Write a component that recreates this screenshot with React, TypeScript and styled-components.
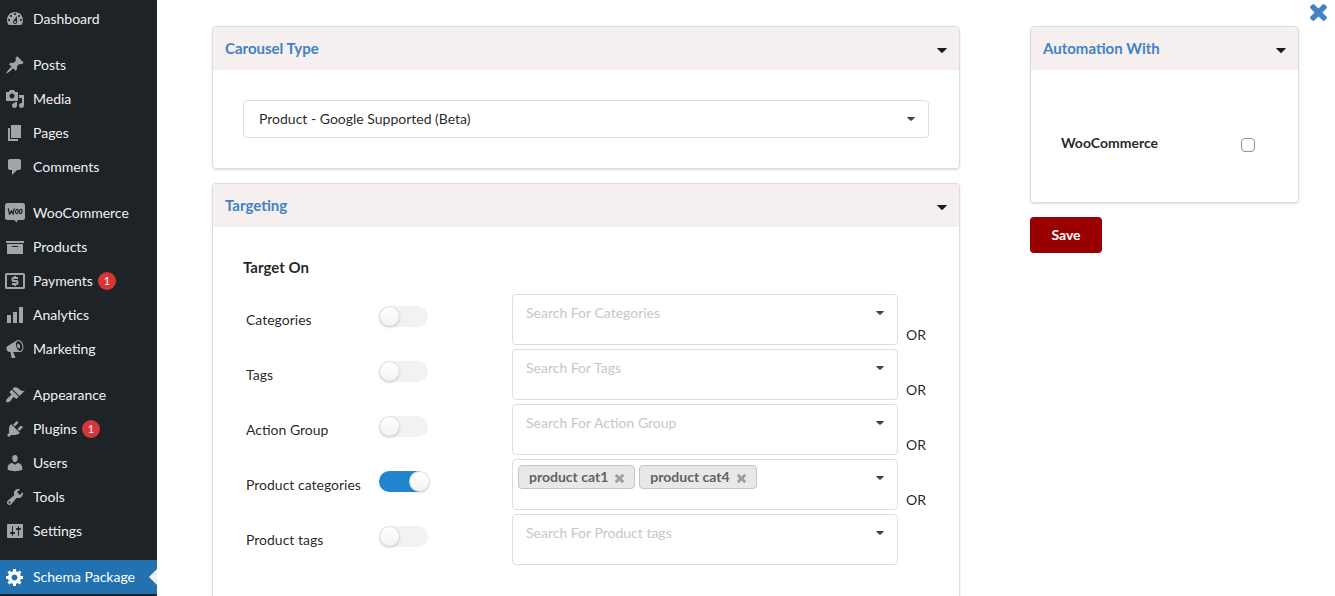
import React, { useState } from 'react';
import styled, { createGlobalStyle } from 'styled-components';

const GlobalStyle = createGlobalStyle`
  *, *::before, *::after { box-sizing: border-box; }
  body {
    margin: 0;
    background: #fff;
    color: rgba(0, 0, 0, 0.87);
    font-family: Lato, 'Helvetica Neue', Arial, sans-serif;
    font-size: 14px;
    line-height: 20px;
  }
  button, input, select { font: inherit; color: inherit; }
`;

const paths = {
  dashboard:
    'M3.76 16h12.48c1.1-1.37 1.76-3.11 1.76-5 0-4.42-3.58-8-8-8s-8 3.58-8 8c0 1.89.66 3.63 1.76 5zM10 4c.55 0 1 .45 1 1s-.45 1-1 1-1-.45-1-1 .45-1 1-1zM6 6c.55 0 1 .45 1 1s-.45 1-1 1-1-.45-1-1 .45-1 1-1zm8 0c.55 0 1 .45 1 1s-.45 1-1 1-1-.45-1-1 .45-1 1-1zm-5.37 5.55L12 7v6c0 1.1-.9 2-2 2s-2-.9-2-2c0-.57.24-1.08.63-1.45zM4 10c.55 0 1 .45 1 1s-.45 1-1 1-1-.45-1-1 .45-1 1-1zm12 0c.55 0 1 .45 1 1s-.45 1-1 1-1-.45-1-1 .45-1 1-1zm-5 3c0-.55-.45-1-1-1s-1 .45-1 1 .45 1 1 1 1-.45 1-1z',
  post:
    'M10.44 3.02l1.82-1.82 6.36 6.35-1.83 1.82c-1.05-.68-2.48-.57-3.41.36l-.75.75c-.92.93-1.04 2.35-.35 3.41l-1.83 1.82-2.41-2.41-2.8 2.79c-.42.42-3.38 2.71-3.8 2.29s1.86-3.39 2.28-3.81l2.79-2.79L4.1 9.36l1.83-1.82c1.05.69 2.48.57 3.4-.36l.75-.75c.93-.92 1.05-2.35.36-3.41z',
  media:
    'M13 11V4c0-.55-.45-1-1-1h-1.67L9 1H5L3.67 3H2c-.55 0-1 .45-1 1v7c0 .55.45 1 1 1h10c.55 0 1-.45 1-1zM7 4.5c1.38 0 2.5 1.12 2.5 2.5S8.38 9.5 7 9.5 4.5 8.38 4.5 7 5.62 4.5 7 4.5zM14 6h5v10.5c0 1.38-1.12 2.5-2.5 2.5S14 17.88 14 16.5s1.12-2.5 2.5-2.5c.17 0 .34.02.5.05V9h-3V6zm-4 8.05V13h2v3.5c0 1.38-1.12 2.5-2.5 2.5S7 17.88 7 16.5 8.12 14 9.5 14c.17 0 .34.02.5.05z',
  page: 'M6 15V2h10v13H6zm-1 1h8v2H3V5h2v11z',
  comments:
    'M5 2h9c1.1 0 2 .9 2 2v7c0 1.1-.9 2-2 2h-2l-5 5v-5H5c-1.1 0-2-.9-2-2V4c0-1.1.9-2 2-2z',
  archive: 'M19 4v2H1V4h18zM2 7h16v10H2V7zm11 3V9H7v1h6z',
  chart: 'M18 18V2h-4v16h4zm-6 0V7H8v11h4zm-6 0v-8H2v8h4z',
  megaphone:
    'M18.15 5.94c.46 1.62.38 3.22-.02 4.48-.42 1.28-1.26 2.18-2.3 2.48-.16.06-.26.06-.4.06-.06.02-.12.02-.18.02-.06.02-.14.02-.22.02h-6.8l2.22 5.5c.02.14-.06.26-.14.34-.08.1-.24.16-.34.16H6.95c-.1 0-.26-.06-.34-.16-.08-.08-.16-.2-.14-.34l-1-5.5H4.25l-.02-.02c-.5.06-1.08-.18-1.54-.62s-.88-1.08-1.06-1.88c-.24-.8-.2-1.56-.02-2.2.18-.62.58-1.08 1.06-1.3l.02-.02 9-5.4c.1-.06.18-.1.24-.16.06-.04.14-.08.24-.12.16-.08.28-.12.5-.18 1.04-.3 2.24.1 3.22.98s1.84 2.24 2.26 3.86zm-2.58 5.98h-.02c.4-.1.74-.34 1.04-.7.58-.7.86-1.76.86-3.04 0-.64-.1-1.3-.28-1.98-.34-1.36-1.02-2.5-1.78-3.24s-1.68-1.1-2.46-.88c-.82.22-1.4.96-1.7 2-.32 1.04-.28 2.36.06 3.72.38 1.36 1 2.5 1.8 3.24.78.74 1.62 1.1 2.48.88zm-2.54-7.08c.22-.04.42-.02.62.04.38.16.76.48 1.02 1s.42 1.2.42 1.78c0 .3-.04.56-.12.8-.18.48-.44.84-.86.94-.34.1-.8-.06-1.14-.4s-.64-.86-.78-1.5c-.18-.62-.12-1.24.02-1.72s.48-.84.82-.94z',
  appearance:
    'M14.48 11.06L7.41 3.99l1.5-1.5c.5-.56 2.3-.47 3.51.32 1.21.8 1.43 1.28 2.91 2.1 1.18.64 2.45 1.26 4.45.85zm-.71.71L6.7 4.7 4.93 6.47c-.39.39-.39 1.02 0 1.41l1.06 1.06c.39.39.39 1.03 0 1.42-.6.6-1.43 1.11-2.21 1.69-.35.26-.7.53-1.01.84C1.43 14.23.4 16.08 1.4 17.07c.99 1 2.84-.03 4.18-1.36.31-.31.58-.66.85-1.02.57-.78 1.08-1.61 1.69-2.21.39-.39 1.02-.39 1.41 0l1.06 1.06c.39.39 1.02.39 1.41 0z',
  plugins:
    'M13.11 4.36L9.87 7.6 8 5.73l3.24-3.24c.35-.34 1.05-.2 1.56.32.52.51.66 1.21.31 1.55zm-8 1.77l.91-1.12 9.01 9.01-1.19.84c-.71.71-2.63 1.16-3.82 1.16H6.14L4.9 17.26c-.59.59-1.54.59-2.12 0-.59-.58-.59-1.53 0-2.12l1.24-1.24v-3.88c0-1.13.4-3.19 1.09-3.89zm7.26 3.97l3.24-3.24c.34-.35 1.04-.21 1.55.31.52.51.66 1.21.31 1.55l-3.24 3.25z',
  users:
    'M10 9.25c-2.27 0-2.73-3.44-2.73-3.44C7 4.02 7.82 2 9.97 2c2.16 0 2.98 2.02 2.71 3.81 0 0-.41 3.44-2.68 3.44zm0 2.57L12.72 10c2.39 0 4.52 2.33 4.52 4.53v2.49s-3.65 1.13-7.24 1.13c-3.65 0-7.24-1.13-7.24-1.13v-2.49c0-2.25 1.94-4.48 4.47-4.48z',
  tools:
    'M16.68 9.77c-1.34 1.34-3.3 1.67-4.95.99l-5.41 6.52c-.99.99-2.59.99-3.58 0s-.99-2.59 0-3.57l6.52-5.42c-.68-1.65-.35-3.61.99-4.95 1.28-1.28 3.12-1.62 4.72-1.06l-2.89 2.89 2.82 2.82 2.86-2.87c.53 1.58.18 3.39-1.08 4.65zM3.81 16.21c.4.39 1.04.39 1.43 0 .4-.4.4-1.04 0-1.43-.39-.4-1.03-.4-1.43 0-.39.39-.39 1.03 0 1.43z',
  settings:
    'M18 16V4c0-.55-.45-1-1-1H3c-.55 0-1 .45-1 1v12c0 .55.45 1 1 1h14c.55 0 1-.45 1-1zM8 11h1c.55 0 1 .45 1 1s-.45 1-1 1H8v1.5c0 .28-.22.5-.5.5s-.5-.22-.5-.5V13H6c-.55 0-1-.45-1-1s.45-1 1-1h1V5.5c0-.28.22-.5.5-.5s.5.22.5.5V11zm5-2h-1c-.55 0-1-.45-1-1s.45-1 1-1h1V5.5c0-.28.22-.5.5-.5s.5.22.5.5V7h1c.55 0 1 .45 1 1s-.45 1-1 1h-1v5.5c0 .28-.22.5-.5.5s-.5-.22-.5-.5V9z',
  generic:
    'M18 12h-2.18c-.17.7-.44 1.35-.81 1.93l1.54 1.54-2.1 2.1-1.54-1.54c-.58.36-1.23.63-1.91.79V19H8v-2.18c-.68-.16-1.33-.43-1.91-.79l-1.54 1.54-2.12-2.12 1.54-1.54c-.36-.58-.63-1.23-.79-1.91H1V9.03h2.17c.16-.7.44-1.35.8-1.94L2.43 5.55l2.1-2.1 1.54 1.54c.58-.37 1.24-.64 1.93-.81V2h3v2.18c.68.16 1.33.43 1.91.79l1.54-1.54 2.12 2.12-1.54 1.54c.36.59.64 1.24.8 1.94H18V12zm-8.5 1.5c1.66 0 3-1.34 3-3s-1.34-3-3-3-3 1.34-3 3 1.34 3 3 3z',
};

type IconName = keyof typeof paths | 'woo' | 'payments';

const MenuSvg = styled.svg`
  width: 20px;
  height: 20px;
  flex: none;
  fill: currentColor;
`;

function MenuIcon({ name }: { name: IconName }) {
  if (name === 'woo') {
    return (
      <MenuSvg viewBox="0 0 20 20" aria-hidden="true">
        <path d="M2.500 0H17.500Q20 0 20 2.500V14.500Q20 17 17.500 17H12.500L12 19.500L9 17H2.500Q0 17 0 14.500V2.500Q0 0 2.500 0Z" />
        <g fill="none" stroke="#1d2327" strokeLinecap="round" strokeLinejoin="round">
          <path strokeWidth="1.200" d="M3.300 5.600L4.600 11.500L6.600 7.500L8.100 11.500L9.200 5.600" />
          <ellipse strokeWidth="1.200" cx="11.900" cy="8.500" rx="1.300" ry="2.200" transform="rotate(12 11.900 8.500)" />
          <ellipse strokeWidth="1.200" cx="15.700" cy="8.500" rx="1.300" ry="2.200" transform="rotate(12 15.700 8.500)" />
        </g>
      </MenuSvg>
    );
  }
  if (name === 'payments') {
    return (
      <MenuSvg viewBox="0 0 20 20" aria-hidden="true">
        <path
          fillRule="evenodd"
          d="M1.500 2H18.500Q20 2 20 3.500V16.500Q20 18 18.500 18H1.500Q0 18 0 16.500V3.500Q0 2 1.500 2ZM2 4V16H18V4Z"
        />
        <path
          fill="none"
          stroke="currentColor"
          strokeWidth="2"
          d="M13 7H8Q7.500 7 7.500 7.800V9.200Q7.500 10 8.200 10H11.800Q12.500 10 12.500 10.600V12.200Q12.500 13 11.800 13H7M10 5V7.500M10 12.500V15"
        />
      </MenuSvg>
    );
  }
  return (
    <MenuSvg viewBox="0 0 20 20" aria-hidden="true">
      <path fillRule="evenodd" d={paths[name]} />
    </MenuSvg>
  );
}

const CrossSvg = styled.svg<{ $size: number }>`
  display: block;
  width: ${(p) => p.$size}px;
  height: ${(p) => p.$size}px;
  fill: currentColor;
`;

const Cross = ({ size }: { size: number }) => (
  <CrossSvg $size={size} viewBox="302 366 1188 1188" aria-hidden="true">
    <path d="M1490 1322q0 40-28 68l-136 136q-28 28-68 28t-68-28l-294-294-294 294q-28 28-68 28t-68-28l-136-136q-28-28-28-68t28-68l294-294-294-294q-28-28-28-68t28-68l136-136q28-28 68-28t68 28l294 294 294-294q28-28 68-28t68 28l136 136q28 28 28 68t-28 68l-294 294 294 294q28 28 28 68z" />
  </CrossSvg>
);

const CaretSvg = styled.svg<{ $small?: boolean }>`
  display: block;
  flex: none;
  width: ${(p) => (p.$small ? 8 : 10)}px;
  height: ${(p) => (p.$small ? 4 : 5)}px;
  fill: ${(p) => (p.$small ? '#444' : '#1b1c1d')};
`;

const Caret = ({ small }: { small?: boolean }) => (
  <CaretSvg $small={small} viewBox="0 0 10 5" aria-hidden="true">
    <path d="M.6 0H9.400Q10 .3 9.600 .8L5.500 4.800Q5 5.200 4.500 4.800L.4 .8Q0 .3 .6 0Z" />
  </CaretSvg>
);

const Layout = styled.div`
  display: flex;
  height: 100vh;
  overflow: hidden;
`;

const Sidebar = styled.nav`
  flex: none;
  width: 157px;
  padding-top: 2px;
  background: #1d2327;
`;

const MenuGroup = styled.ul`
  list-style: none;
  margin: 0 0 12px;
  padding: 0;
`;

const MenuLink = styled.a<{ $active?: boolean }>`
  position: relative;
  display: flex;
  align-items: center;
  height: 34px;
  padding-left: 5px;
  gap: 8px;
  text-decoration: none;
  white-space: nowrap;
  color: ${(p) => (p.$active ? '#fff' : '#f0f0f1')};
  background: ${(p) => (p.$active ? '#2271b1' : 'transparent')};

  ${MenuSvg} {
    color: ${(p) => (p.$active ? '#fff' : '#a0a5aa')};
  }

  &::after {
    content: '';
    display: ${(p) => (p.$active ? 'block' : 'none')};
    position: absolute;
    right: 0;
    top: 9px;
    border: 8px solid transparent;
    border-left-width: 0;
    border-right-color: #f0f0f1;
  }
`;

const Badge = styled.span`
  width: 18px;
  height: 18px;
  margin-left: -3px;
  border-radius: 9px;
  background: #d63638;
  color: #fff;
  font-size: 11px;
  line-height: 18px;
  text-align: center;
`;

const Main = styled.main`
  position: relative;
  flex: 1;
  min-width: 0;
  display: grid;
  grid-template-columns: 748fr 269fr;
  column-gap: 70px;
  align-items: start;
  padding: 26px 36px 0 55px;
`;

const CloseButton = styled.button`
  position: absolute;
  top: 4px;
  right: 8px;
  padding: 0;
  border: 0;
  background: none;
  color: #4183c4;
  cursor: pointer;
`;

const Column = styled.div`
  display: flex;
  flex-direction: column;
  gap: 14px;
`;

const Card = styled.section`
  border: 1px solid #dcdcde;
  border-radius: 4px;
  box-shadow: 0 1px 2px rgba(34, 36, 38, 0.15);
`;

const CardHeader = styled.header`
  display: flex;
  align-items: center;
  justify-content: space-between;
  height: 43px;
  padding: 0 12px;
  border-radius: 3px 3px 0 0;
  background: #f5efef;
`;

const CardTitle = styled.h2`
  margin: 0;
  padding-bottom: 2px;
  font-size: 15px;
  font-weight: 700;
  line-height: 20px;
  color: #4183c4;
`;

const CardToggle = styled.button`
  padding: 4px 0 0;
  border: 0;
  background: none;
  cursor: pointer;
`;

const CardBody = styled.div`
  padding: 30px;
`;

const SelectWrap = styled.div`
  position: relative;

  ${CaretSvg} {
    position: absolute;
    right: 14px;
    top: 17px;
    pointer-events: none;
  }
`;

const Select = styled.select`
  display: block;
  appearance: none;
  width: 100%;
  height: 38px;
  padding: 0 32px 0 15px;
  border: 1px solid #dededf;
  border-radius: 4px;
  background: #fff;
`;

const SectionTitle = styled.h3`
  margin: 0 0 17px;
  font-size: 15px;
  font-weight: 700;
  line-height: 20px;
`;

const TargetList = styled.div`
  display: flex;
  flex-direction: column;
  gap: 4px;
  padding: 0 0 30px 3px;
`;

const TargetRow = styled.div`
  display: grid;
  grid-template-columns: minmax(0, 133fr) minmax(0, 133fr) minmax(0, 386fr) minmax(0, 31fr);
  align-items: center;
`;

const TargetLabel = styled.label`
  white-space: nowrap;
`;

const Switch = styled.input`
  appearance: none;
  position: relative;
  width: 49px;
  height: 21px;
  margin: 0 0 6px;
  border-radius: 11px;
  background: #f2f2f2;
  cursor: pointer;

  &::before {
    content: '';
    position: absolute;
    top: 0;
    left: 0;
    width: 21px;
    height: 21px;
    border-radius: 50%;
    background: #fff linear-gradient(transparent, rgba(0, 0, 0, 0.05));
    box-shadow: 0 1px 2px rgba(34, 36, 38, 0.15), 0 0 0 1px rgba(34, 36, 38, 0.15) inset;
  }

  &:checked {
    background: #2185d0;
  }

  &:checked::before {
    left: 30px;
  }
`;

const SearchBox = styled.div`
  display: flex;
  align-items: flex-start;
  height: 51px;
  padding: 5px 13px 0 5px;
  gap: 4px;
  border: 1px solid #dededf;
  border-radius: 4px;

  ${CaretSvg} {
    margin-top: 11px;
  }
`;

const SearchInput = styled.input`
  flex: 1;
  min-width: 0;
  height: 24px;
  padding: 0 8px;
  border: 0;
  outline: 0;
  background: none;

  &::placeholder {
    color: #c7c7c7;
    opacity: 1;
  }
`;

const Chip = styled.span`
  display: flex;
  align-items: center;
  height: 24px;
  padding: 0 10px;
  gap: 7px;
  border: 1px solid #c6c7c7;
  border-radius: 4px;
  background: #e8e8e8;
  color: #636363;
  font-weight: 700;
  white-space: nowrap;
`;

const ChipRemove = styled.button`
  padding: 2px 0 0;
  border: 0;
  background: none;
  color: #9e9e9e;
  cursor: pointer;
`;

const OrText = styled.span`
  align-self: end;
  padding-left: 8px;
`;

const AutomationBody = styled.div`
  display: flex;
  align-items: center;
  justify-content: space-between;
  padding: 62px 43px 48px 30px;
`;

const AutomationLabel = styled.label`
  font-weight: 700;
  line-height: 22px;
`;

const Checkbox = styled.input`
  appearance: none;
  width: 14px;
  height: 14px;
  margin: 4px 0 0;
  border: 1px solid #8c8f94;
  border-radius: 4px;
  background: #fff;

  &:checked {
    background: #2185d0;
  }
`;

const SaveButton = styled.button`
  align-self: flex-start;
  width: 72px;
  height: 36px;
  padding: 0;
  border: 0;
  border-radius: 4px;
  background: #900;
  color: #fff;
  font-weight: 700;
  cursor: pointer;
`;

interface MenuEntry {
  icon: IconName;
  label: string;
  count?: number;
  active?: boolean;
}

const menu: MenuEntry[][] = [
  [{ icon: 'dashboard', label: 'Dashboard' }],
  [
    { icon: 'post', label: 'Posts' },
    { icon: 'media', label: 'Media' },
    { icon: 'page', label: 'Pages' },
    { icon: 'comments', label: 'Comments' },
  ],
  [
    { icon: 'woo', label: 'WooCommerce' },
    { icon: 'archive', label: 'Products' },
    { icon: 'payments', label: 'Payments', count: 1 },
    { icon: 'chart', label: 'Analytics' },
    { icon: 'megaphone', label: 'Marketing' },
  ],
  [
    { icon: 'appearance', label: 'Appearance' },
    { icon: 'plugins', label: 'Plugins', count: 1 },
    { icon: 'users', label: 'Users' },
    { icon: 'tools', label: 'Tools' },
    { icon: 'settings', label: 'Settings' },
  ],
  [{ icon: 'generic', label: 'Schema Package', active: true }],
];

interface Target {
  id: string;
  label: string;
  enabled?: boolean;
  chips?: string[];
}

const targets: Target[] = [
  { id: 'categories', label: 'Categories' },
  { id: 'tags', label: 'Tags' },
  { id: 'action-group', label: 'Action Group' },
  {
    id: 'product-categories',
    label: 'Product categories',
    enabled: true,
    chips: ['product cat1', 'product cat4'],
  },
  { id: 'product-tags', label: 'Product tags' },
];

function Panel({ title, children }: { title: string; children: React.ReactNode }) {
  const [open, setOpen] = useState(true);
  return (
    <Card>
      <CardHeader>
        <CardTitle>{title}</CardTitle>
        <CardToggle
          type="button"
          aria-label={`Toggle ${title}`}
          aria-expanded={open}
          onClick={() => setOpen(!open)}
        >
          <Caret />
        </CardToggle>
      </CardHeader>
      {open && children}
    </Card>
  );
}

function TargetField({ target, last }: { target: Target; last: boolean }) {
  const [chips, setChips] = useState(target.chips ?? []);
  return (
    <TargetRow>
      <TargetLabel htmlFor={target.id}>{target.label}</TargetLabel>
      <Switch id={target.id} type="checkbox" defaultChecked={target.enabled} />
      <SearchBox>
        {chips.map((chip) => (
          <Chip key={chip}>
            {chip}
            <ChipRemove
              type="button"
              aria-label={`Remove ${chip}`}
              onClick={() => setChips(chips.filter((c) => c !== chip))}
            >
              <Cross size={9} />
            </ChipRemove>
          </Chip>
        ))}
        <SearchInput
          type="text"
          aria-label={`Search ${target.label}`}
          placeholder={chips.length ? undefined : `Search For ${target.label}`}
        />
        <Caret small />
      </SearchBox>
      {!last && <OrText>OR</OrText>}
    </TargetRow>
  );
}

export default function App() {
  return (
    <>
      <GlobalStyle />
      <Layout>
        <Sidebar aria-label="Main menu">
          {menu.map((group) => (
            <MenuGroup key={group[0].label}>
              {group.map((entry) => (
                <li key={entry.label}>
                  <MenuLink href="#" $active={entry.active}>
                    <MenuIcon name={entry.icon} />
                    {entry.label}
                    {entry.count && <Badge>{entry.count}</Badge>}
                  </MenuLink>
                </li>
              ))}
            </MenuGroup>
          ))}
        </Sidebar>
        <Main>
          <Column>
            <Panel title="Carousel Type">
              <CardBody>
                <SelectWrap>
                  <Select aria-label="Carousel Type">
                    <option>Product - Google Supported (Beta)</option>
                  </Select>
                  <Caret small />
                </SelectWrap>
              </CardBody>
            </Panel>
            <Panel title="Targeting">
              <CardBody>
                <SectionTitle>Target On</SectionTitle>
                <TargetList>
                  {targets.map((target, i) => (
                    <TargetField
                      key={target.id}
                      target={target}
                      last={i === targets.length - 1}
                    />
                  ))}
                </TargetList>
              </CardBody>
            </Panel>
          </Column>
          <Column>
            <Panel title="Automation With">
              <AutomationBody>
                <AutomationLabel htmlFor="woocommerce">WooCommerce</AutomationLabel>
                <Checkbox id="woocommerce" type="checkbox" />
              </AutomationBody>
            </Panel>
            <SaveButton type="button">Save</SaveButton>
          </Column>
          <CloseButton type="button" aria-label="Close">
            <Cross size={17} />
          </CloseButton>
        </Main>
      </Layout>
    </>
  );
}
